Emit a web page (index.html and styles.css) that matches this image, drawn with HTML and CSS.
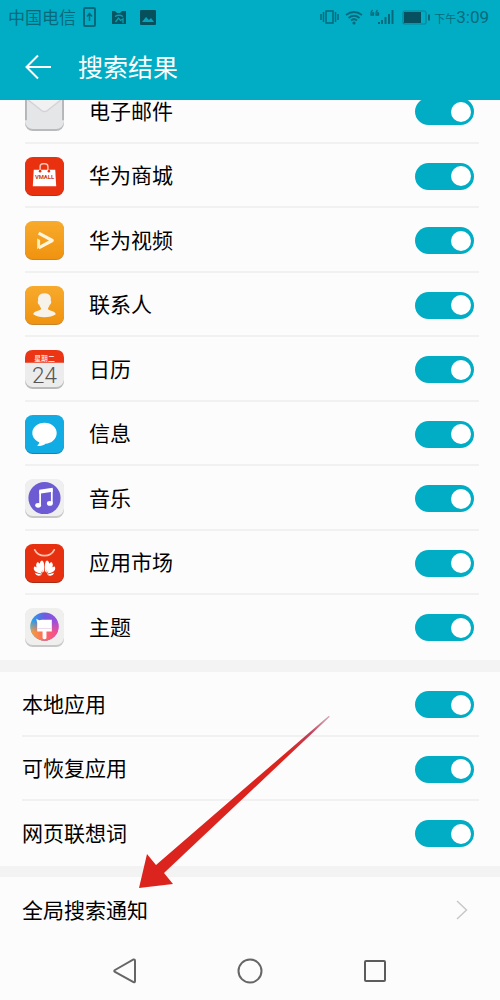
FILE: index.html
```html
<!DOCTYPE html>
<html lang="zh-CN">

<head>
    <meta charset="utf-8">
    <meta name="viewport" content="width=device-width, initial-scale=1">
    <title>搜索结果</title>
    <link rel="stylesheet" href="styles.css">
</head>

<body>
    <header class="top">
        <div class="status">
            <span class="carrier">中国电信</span>
            <svg class="status-left" width="76" height="20" viewBox="0 0 76 20">
                <rect x="2" y="1" width="11" height="18" rx="1" fill="none" stroke="#06697b" stroke-width="2" />
                <path d="M7.500 14V7M5 9.500L7.500 6.500L10 9.500" fill="none" stroke="#06697b" stroke-width="1.500" />
                <path d="M30 4h3l2 2h3l2-2h4v13H30z" fill="#075563" />
                <path d="M33 9.500q4-2.500 8 0M33.500 15l3-4 2 2.500 2.500-1.500v4" fill="none" stroke="#06a0b5" stroke-width="1.300" />
                <rect x="58" y="3" width="16" height="15" rx="1" fill="#06505e" />
                <path d="M60 15l4-5 3 3 2-2 3 4z" fill="#04a4ba" />
            </svg>
            <svg class="status-right" width="112" height="20" viewBox="0 0 112 20">
                <g fill="none" stroke="#066a7c" stroke-width="1.500">
                    <rect x="8" y="4" width="7" height="12" />
                    <path d="M5.500 5v10M17.500 5v10M3 7v6M20 7v6" />
                    <path d="M28 8q8-6 16 0M30.500 11q5.500-4.500 11 0M33 13.500q3-2.500 6 0" stroke-width="1.800" />
                </g>
                <circle cx="36" cy="16" r="1.600" fill="#066a7c" />
                <path d="M54.500 3q-2 2-1.500 5h2.500V6H54M59.500 3q-2 2-1.500 5h2.500V6H59" fill="none" stroke="#066a7c" stroke-width="1.300" />
                <path d="M60 15h2v2h-2zM63 13h2v4h-2zM66.500 10h2v7h-2zM70 7h2v10h-2zM73.500 3h2v14h-2z" fill="#066a7c" />
                <rect x="85" y="4" width="23" height="13" rx="2" fill="none" stroke="#078398" stroke-width="1.200" />
                <rect x="86" y="5" width="17" height="11" fill="#06505f" />
                <path d="M110 7.500h2v6h-2z" fill="#066a7c" />
            </svg>
            <span class="time"><small>下午</small>3:09</span>
        </div>
        <div class="title-bar">
            <button class="back" type="button" aria-label="返回">
                <svg width="28" height="26" viewBox="0 0 28 26">
                    <path d="M13 1.500L1.500 13L13 24.500M1.500 13h24.500" fill="none" stroke="#fff" stroke-width="2" />
                </svg>
            </button>
            <h1>搜索结果</h1>
        </div>
    </header>

    <main>
        <ul class="list apps">
            <li>
                <svg class="icon" viewBox="0 0 40 40">
                    <rect y="1" width="40" height="39" rx="8" fill="#b9babc" />
                    <rect width="40" height="38" rx="8" fill="#e5e6e8" />
                    <path d="M1 7v22M39 7v22" stroke="#a5a6ab" stroke-width="1.500" />
                    <path d="M3 8l14 11q3 2 6 0L37 8" fill="#f1f1f2" stroke="#d2d3d6" stroke-width="1.500" />
                </svg>
                <label for="mail">电子邮件</label>
                <input class="toggle" type="checkbox" id="mail" checked>
            </li>
            <li>
                <svg class="icon" viewBox="0 0 40 40">
                    <rect y="1" width="40" height="39" rx="8" fill="#b93218" />
                    <rect width="40" height="39" rx="8" fill="#e93110" />
                    <path d="M15.500 14V10q0-3 3-3h2q3 0 3 3v4" fill="none" stroke="#fbc4b7" stroke-width="1.500" />
                    <path d="M9 13h22l1 17H8z" fill="#fff" />
                    <circle cx="15.500" cy="14.500" r="1.300" fill="#e93110" />
                    <circle cx="24.500" cy="14.500" r="1.300" fill="#e93110" />
                    <text x="20" y="23" class="vmall">VMALL</text>
                </svg>
                <label for="vmall">华为商城</label>
                <input class="toggle" type="checkbox" id="vmall" checked>
            </li>
            <li>
                <svg class="icon" viewBox="0 0 40 40">
                    <rect y="1" width="40" height="39" rx="8" fill="#c58530" />
                    <rect width="40" height="39" rx="8" fill="url(#orange)" />
                    <path d="M14 12.500L28 20L14 27.500" fill="none" stroke="#fff6dd" stroke-width="3.200" stroke-linejoin="round" />
                    <path d="M12.500 18l3 1.500v7l-3 2.500z" fill="#ffedb8" />
                </svg>
                <label for="video">华为视频</label>
                <input class="toggle" type="checkbox" id="video" checked>
            </li>
            <li>
                <svg class="icon" viewBox="0 0 40 40">
                    <rect y="1" width="40" height="39" rx="8" fill="#c58530" />
                    <rect width="40" height="39" rx="8" fill="url(#orange)" />
                    <path d="M20 7.500c5 0 7 3 6.500 7.500 1 1 0 4-1 4-.5 2-1.500 3-2 4 0 3 8 2 8 6-5 4-18 4-23 0 0-4 8-3 8-6-.5-1-1.500-2-2-4-1 0-2-3-1-4C13 10.500 15 7.500 20 7.500z" fill="#f7f3eb" />
                </svg>
                <label for="contacts">联系人</label>
                <input class="toggle" type="checkbox" id="contacts" checked>
            </li>
            <li>
                <svg class="icon" viewBox="0 0 40 40">
                    <rect y="1" width="40" height="39" rx="8" fill="#b9babb" />
                    <rect width="40" height="38" rx="8" fill="#ececec" />
                    <path d="M0 13V8q0-8 8-8h24q8 0 8 8v5z" fill="#ec3514" />
                    <text x="20" y="11" class="weekday">星期二</text>
                    <text x="20" y="34" class="day">24</text>
                </svg>
                <label for="calendar">日历</label>
                <input class="toggle" type="checkbox" id="calendar" checked>
            </li>
            <li>
                <svg class="icon" viewBox="0 0 40 40">
                    <rect y="1" width="40" height="39" rx="8" fill="#1684ae" />
                    <rect width="40" height="39" rx="8" fill="#10ace3" />
                    <path d="M20 8c7 0 12.500 4.500 12.500 10.500S27 29.500 21 29.500c-2 2-5 2.500-8.500 2 1.500-1 2-2.500 2-3.500-4.500-2-7-5.500-7-9.500C7.500 12.500 13 8 20 8z" fill="#fff" />
                </svg>
                <label for="message">信息</label>
                <input class="toggle" type="checkbox" id="message" checked>
            </li>
            <li>
                <svg class="icon" viewBox="0 0 40 40">
                    <rect y="1" width="40" height="39" rx="8" fill="#c8c8c8" />
                    <rect width="40" height="38" rx="8" fill="#efefef" />
                    <circle cx="20" cy="19.500" r="16.500" fill="#6c5bd3" />
                    <path d="M15.500 27V13l12-2v14" fill="none" stroke="#fff" stroke-width="1.800" />
                    <path d="M14.600 11l13.800-2v4l-13.800 2z" fill="#fff" />
                    <ellipse cx="13.500" cy="27" rx="3" ry="2.500" fill="#fff" />
                    <ellipse cx="25.500" cy="25" rx="3" ry="2.500" fill="#fff" />
                </svg>
                <label for="music">音乐</label>
                <input class="toggle" type="checkbox" id="music" checked>
            </li>
            <li>
                <svg class="icon" viewBox="0 0 40 40">
                    <rect y="1" width="40" height="39" rx="8" fill="#a92b17" />
                    <rect width="40" height="39" rx="8" fill="#e73010" />
                    <path d="M10 6q3 6 10 6t10-6" fill="none" stroke="#ffc3ae" stroke-width="1.800" stroke-linecap="round" />
                    <g fill="#fff">
                        <path d="M19.500 29C14.500 24 14 18 17.500 17Q20.500 18 19.500 29zM20.500 29C25.500 24 26 18 22.500 17Q19.500 18 20.500 29z" />
                        <path d="M18.500 29.500C11 25.500 10 21 13 18.500Q17 20 18.500 29.500zM21.500 29.500C29 25.500 30 21 27 18.500Q23 20 21.500 29.500z" />
                        <path d="M17.500 30.500C9.500 29 8 26 9.500 23Q14 23 17.500 30.500zM22.500 30.500C30.500 29 32 26 30.500 23Q26 23 22.500 30.500z" />
                        <path d="M17.500 31.500Q12 34.500 10 29.500zM22.500 31.500Q28 34.500 30 29.500z" />
                    </g>
                </svg>
                <label for="market">应用市场</label>
                <input class="toggle" type="checkbox" id="market" checked>
            </li>
            <li>
                <svg class="icon" viewBox="0 0 40 40">
                    <defs>
                        <linearGradient id="orange" x1="0" y1="0" x2="0" y2="1">
                            <stop offset="0" stop-color="#f8aa2c" />
                            <stop offset="1" stop-color="#f0930f" />
                        </linearGradient>
                        <linearGradient id="wheel" x1="0" y1="0" x2="1" y2="0">
                            <stop offset="0" stop-color="#1cabed" />
                            <stop offset=".5" stop-color="#6c5ce0" />
                            <stop offset="1" stop-color="#a64bdc" />
                        </linearGradient>
                        <linearGradient id="warm" x1="0" y1="0" x2="1" y2="0">
                            <stop offset="0" stop-color="#f7a13c" />
                            <stop offset=".5" stop-color="#fb6a5c" />
                            <stop offset="1" stop-color="#ef4aa0" />
                        </linearGradient>
                        <linearGradient id="fade" x1="0" y1="0" x2="0" y2="1">
                            <stop offset=".3" stop-color="#fff" stop-opacity="0" />
                            <stop offset=".7" stop-color="#fff" />
                        </linearGradient>
                        <mask id="lower">
                            <rect x="5" y="4" width="30" height="30" fill="url(#fade)" />
                        </mask>
                    </defs>
                    <rect y="1" width="40" height="39" rx="8" fill="#c8c8c8" />
                    <rect width="40" height="38" rx="8" fill="#efefee" />
                    <circle cx="20" cy="19" r="14.500" fill="url(#wheel)" />
                    <circle cx="20" cy="19" r="14.500" fill="url(#warm)" mask="url(#lower)" />
                    <path d="M11.500 11l3 1.500 3-.5h10v12h-5.500v7q-2 2-4 0v-7H12.500V15z" fill="#fff" />
                    <path d="M13 21h14" stroke="#ead9ef" />
                </svg>
                <label for="theme">主题</label>
                <input class="toggle" type="checkbox" id="theme" checked>
            </li>
        </ul>

        <ul class="list">
            <li>
                <label for="local">本地应用</label>
                <input class="toggle" type="checkbox" id="local" checked>
            </li>
            <li>
                <label for="restore">可恢复应用</label>
                <input class="toggle" type="checkbox" id="restore" checked>
            </li>
            <li>
                <label for="suggest">网页联想词</label>
                <input class="toggle" type="checkbox" id="suggest" checked>
            </li>
        </ul>

        <a class="link-row" href="#">
            <span>全局搜索通知</span>
            <svg width="12" height="20" viewBox="0 0 12 20">
                <path d="M1 1l9.500 9L1 19" fill="none" stroke="#c8c8c8" stroke-width="1.500" />
            </svg>
        </a>

        <svg class="arrow" width="192" height="173" viewBox="0 0 192 173">
            <defs>
                <linearGradient id="tail" x1="1" y1="0" x2="0" y2="1">
                    <stop offset="0" stop-color="#c88a98" stop-opacity=".7" />
                    <stop offset=".1" stop-color="#c0405a" />
                    <stop offset=".22" stop-color="#dc241f" />
                </linearGradient>
            </defs>
            <path d="M191.500 0L190.500 0L18 149L9 138L1 172L35 168L26 157L191.500 1Z" fill="url(#tail)" />
        </svg>
    </main>

    <nav class="keys">
        <button type="button" aria-label="返回键">
            <svg width="26" height="28" viewBox="0 0 26 28">
                <path d="M3 13L21.500 2.500Q23 2 23 4v20q0 2-1.500 1L3 15q-1.500-1 0-2z" fill="none" stroke="#666" stroke-width="2" />
            </svg>
        </button>
        <button type="button" aria-label="主屏幕">
            <svg width="26" height="28" viewBox="0 0 26 28">
                <circle cx="13" cy="14" r="11.500" fill="none" stroke="#666" stroke-width="2" />
            </svg>
        </button>
        <button type="button" aria-label="最近任务">
            <svg width="26" height="28" viewBox="0 0 26 28">
                <rect x="3" y="4" width="20" height="20" rx="1" fill="none" stroke="#5c5c5c" stroke-width="2" />
            </svg>
        </button>
    </nav>
</body>

</html>
```
FILE: styles.css
```css
* {
    box-sizing: border-box;
}

body {
    margin: 0;
    min-height: 100vh;
    display: flex;
    flex-direction: column;
    background: #fcfcfc;
    color: #000;
    font-family: Roboto, "Noto Sans CJK SC", sans-serif;
    font-size: 21px;
}

button {
    padding: 0;
    border: none;
    background: none;
    cursor: pointer;
}

svg {
    display: block;
    flex: none;
}

/* header */
.top {
    position: relative;
    z-index: 1;
    height: 100px;
    background: #00adc5;
}

.status {
    height: 34px;
    padding: 0 11px 0 8px;
    display: flex;
    align-items: center;
    color: #066a7c;
    font-size: 17px;
}

.carrier {
    padding-bottom: 2px;
}

.status-left {
    margin-left: 6px;
}

.status-right {
    margin-left: auto;
}

.time {
    margin-left: 4px;
    white-space: nowrap;
}

.time small {
    font-size: 11px;
}

.title-bar {
    height: 66px;
    padding-left: 25px;
    display: flex;
    align-items: center;
    gap: 25px;
}

h1 {
    margin: 0;
    padding-bottom: 2px;
    color: #fff;
    font-size: 25px;
    font-weight: 400;
}

/* settings lists */
main {
    position: relative;
}

.list {
    margin: 0;
    padding: 0 21px 0 22px;
    list-style: none;
    border-bottom: 11px solid #f3f3f3;
}

.list li {
    height: 65px;
    padding: 2px 5px 0 0;
    display: flex;
    align-items: center;
    border-bottom: 2px solid #f1f1f1;
}

.list li:nth-child(even) {
    height: 64px;
}

.list li:last-child {
    border-bottom-color: transparent;
}

/* scrolled a little, the first row runs under the header */
.apps {
    margin-top: -21px;
    padding-left: 25px;
    border-bottom-width: 12px;
}

.list label {
    flex: 1;
    padding-bottom: 4px;
}

.icon {
    width: 39px;
    height: 41px;
    margin-right: 25px;
}

.toggle {
    appearance: none;
    width: 59px;
    height: 27px;
    margin: 0;
    padding: 3px;
    display: flex;
    align-items: center;
    border-radius: 14px;
    background: #00adc5;
    cursor: pointer;
}

.toggle::before {
    content: "";
    width: 20px;
    height: 20px;
    border-radius: 50%;
    background: #fff;
}

.toggle:checked {
    justify-content: flex-end;
}

.toggle:not(:checked) {
    background: #bbb;
}

.link-row {
    height: 65px;
    padding: 0 32px 0 22px;
    display: flex;
    align-items: center;
    justify-content: space-between;
    color: inherit;
    text-decoration: none;
}

.link-row span {
    padding-bottom: 2px;
}

.arrow {
    position: absolute;
    right: 170px;
    bottom: 53px;
    pointer-events: none;
}

/* text inside the icons */
.vmall {
    fill: #c93a20;
    font-size: 6px;
    font-weight: 700;
    text-anchor: middle;
}

.weekday {
    fill: #ffd9ce;
    font-size: 7px;
    font-weight: 700;
    text-anchor: middle;
}

.day {
    fill: #555;
    font-size: 23px;
    font-weight: 300;
    text-anchor: middle;
}

/* navigation keys */
.keys {
    height: 58px;
    padding: 0 62px;
    display: grid;
    grid-template-columns: repeat(3, 1fr);
    place-items: center;
}
```
